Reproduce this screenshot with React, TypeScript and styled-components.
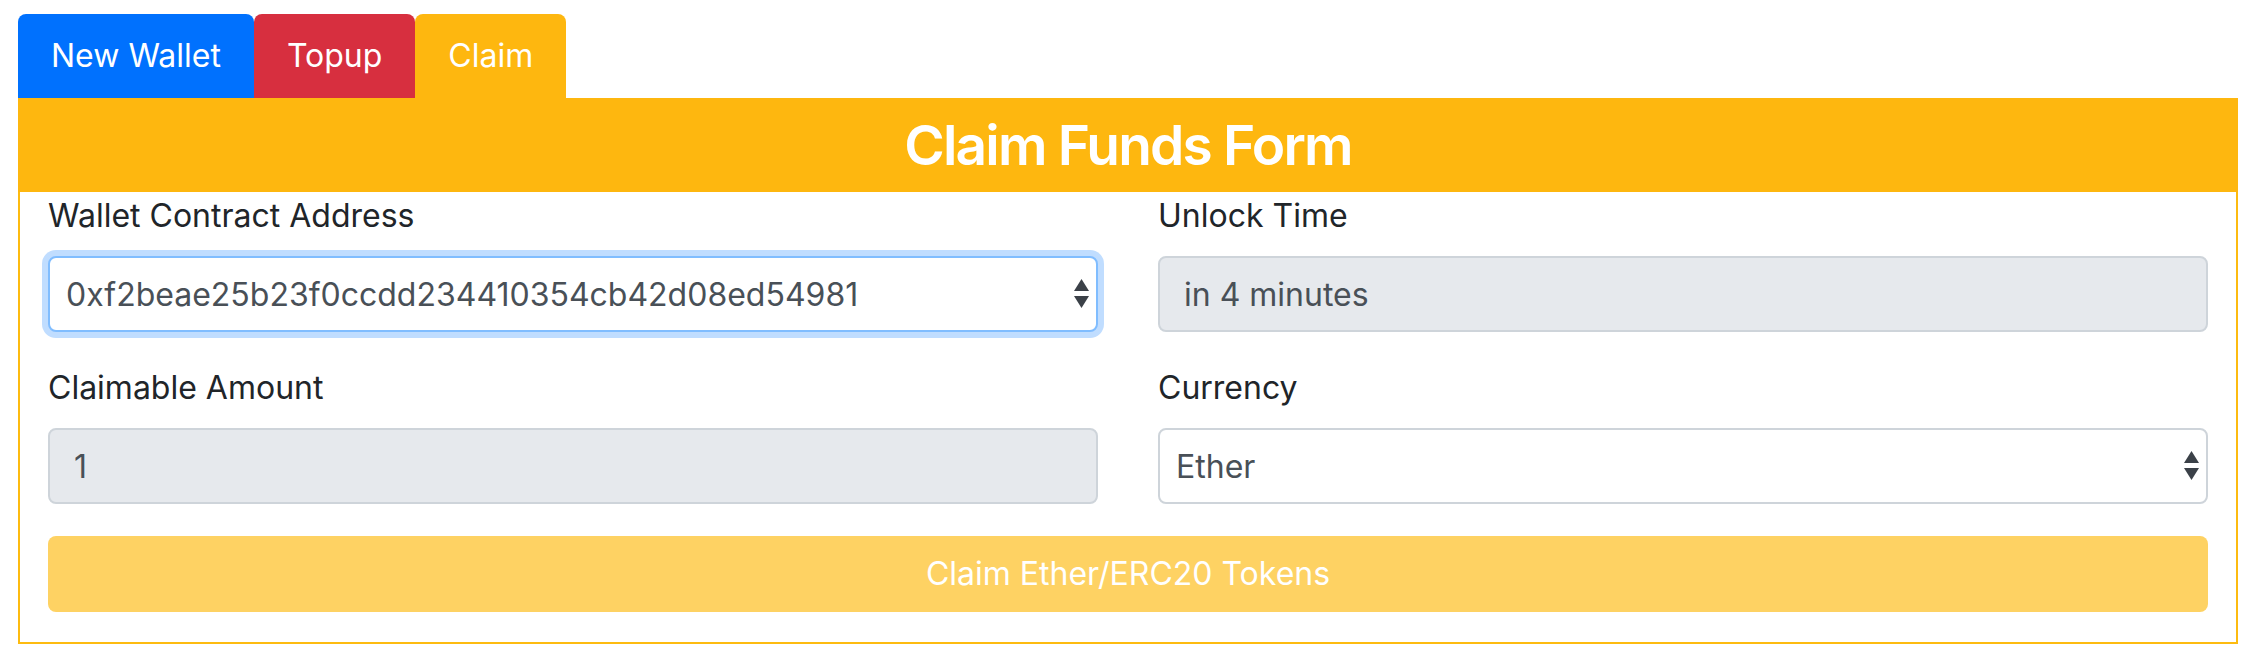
import styled, { createGlobalStyle } from "styled-components";

const GlobalStyle = createGlobalStyle`
  html, body {
    margin: 0;
    padding: 0;
    background: #ffffff;
  }
  body {
    font-family: Inter, "Liberation Sans", Arial, sans-serif;
  }
`;

const Page = styled.div`
  width: 2220px;
  padding: 14px 20px 0 18px;
`;

const TabBar = styled.nav`
  display: flex;
`;

const Tab = styled.button<{ $bg: string }>`
  height: 84px;
  padding: 0 33px;
  border: 0;
  border-radius: 8px 8px 0 0;
  background: ${(p) => p.$bg};
  color: #ffffff;
  font-family: Inter, "Liberation Sans", Arial, sans-serif;
  font-size: 32px;
  line-height: 48px;
  cursor: pointer;
`;

const Panel = styled.section`
  display: flex;
  flex-direction: column;
`;

const PanelHeader = styled.h3`
  margin: 0;
  height: 94px;
  background: #feb70f;
  color: #ffffff;
  text-align: center;
  font-size: 55px;
  font-weight: 600;
  letter-spacing: -1.8px;
  line-height: 94px;
`;

const PanelBody = styled.form`
  display: grid;
  grid-template-columns: 1fr 1fr;
  column-gap: 60px;
  row-gap: 32px;
  padding: 0 28px 30px;
  border: 2px solid #fdbb10;
  border-top: 0;
`;

const Field = styled.div`
  display: flex;
  flex-direction: column;
`;

const Label = styled.label`
  margin-bottom: 16px;
  color: #212529;
  font-size: 32px;
  line-height: 48px;
`;

const TextBox = styled.input`
  box-sizing: border-box;
  height: 76px;
  padding: 0 24px;
  border: 2px solid #ced4da;
  border-radius: 8px;
  background: #e6e9ed;
  color: #495057;
  font-family: inherit;
  font-size: 32px;
  outline: none;
`;

const SelectWrap = styled.div`
  position: relative;
  display: flex;
`;

const Select = styled.select<{ $focused?: boolean }>`
  appearance: none;
  flex: 1;
  box-sizing: border-box;
  height: 76px;
  padding: 0 40px 0 16px;
  border: 2px solid ${(p) => (p.$focused ? "#80bdff" : "#ced4da")};
  border-radius: 8px;
  box-shadow: ${(p) => (p.$focused ? "0 0 0 6px #c0ddff" : "none")};
  background: #ffffff;
  color: #495057;
  font-family: inherit;
  font-size: 32px;
  outline: none;
`;

const Arrows = styled.svg`
  position: absolute;
  right: 9px;
  top: 23px;
  pointer-events: none;
`;

const SubmitButton = styled.button`
  grid-column: 1 / -1;
  height: 76px;
  border: 0;
  border-radius: 8px;
  background: #fed263;
  color: #ffffff;
  font-family: inherit;
  font-size: 32px;
  line-height: 48px;
`;

function SelectArrows() {
  return (
    <Arrows width="15" height="30" viewBox="0 0 15 30">
      <path d="M7.5 0 L15 12 L0 12 Z" fill="#3b4148" />
      <path d="M0 17 L15 17 L7.5 29 Z" fill="#3b4148" />
    </Arrows>
  );
}

interface SelectFieldProps {
  label: string;
  value: string;
  focused?: boolean;
}

function SelectField({ label, value, focused }: SelectFieldProps) {
  return (
    <Field>
      <Label>{label}</Label>
      <SelectWrap>
        <Select $focused={focused} defaultValue={value}>
          <option value={value}>{value}</option>
        </Select>
        <SelectArrows />
      </SelectWrap>
    </Field>
  );
}

function ReadonlyField({ label, value }: { label: string; value: string }) {
  return (
    <Field>
      <Label>{label}</Label>
      <TextBox readOnly value={value} />
    </Field>
  );
}

export default function App() {
  return (
    <Page>
      <GlobalStyle />
      <TabBar>
        <Tab $bg="#0071fe">New Wallet</Tab>
        <Tab $bg="#d72f3f">Topup</Tab>
        <Tab $bg="#feb70f">Claim</Tab>
      </TabBar>
      <Panel>
        <PanelHeader>Claim Funds Form</PanelHeader>
        <PanelBody onSubmit={(e) => e.preventDefault()}>
          <SelectField
            label="Wallet Contract Address"
            value="0xf2beae25b23f0ccdd234410354cb42d08ed54981"
            focused
          />
          <ReadonlyField label="Unlock Time" value="in 4 minutes" />
          <ReadonlyField label="Claimable Amount" value="1" />
          <SelectField label="Currency" value="Ether" />
          <SubmitButton disabled>Claim Ether/ERC20 Tokens</SubmitButton>
        </PanelBody>
      </Panel>
    </Page>
  );
}
